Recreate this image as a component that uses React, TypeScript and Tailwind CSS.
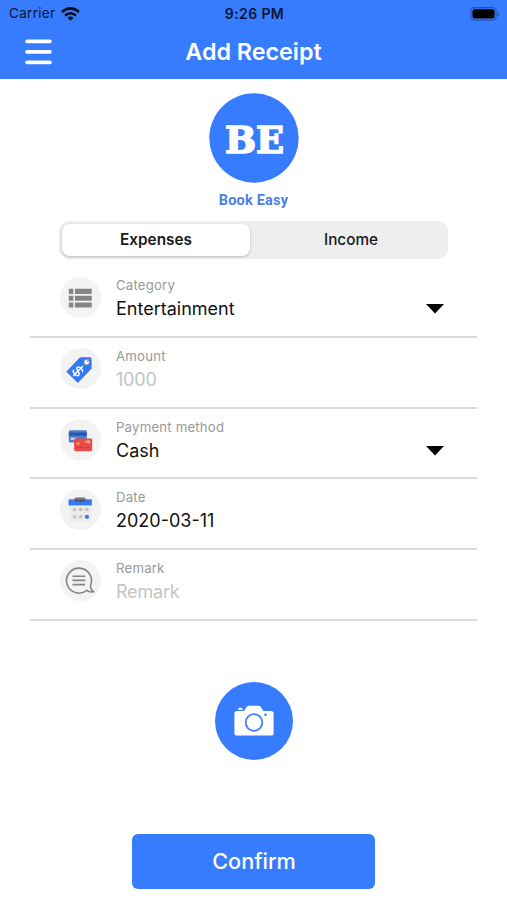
import type { ReactNode } from "react";

type Field = {
  label: string;
  value: string;
  icon: ReactNode;
  placeholder?: boolean;
  select?: boolean;
};

const ListIcon = () => (
  <svg width="41" height="41" viewBox="0 0 42 42" fill="#858585">
    <path d="M9 12.1h4.7v5.2H9zM15.3 12.1h17.2v5.2H15.3zM9 19.1h4.7v5.2H9zM15.3 19.1h17.2v5.2H15.3zM9 26h4.7v5.2H9zM15.3 26h17.2v5.2H15.3z" />
  </svg>
);

const TagIcon = () => (
  <svg width="41" height="41" viewBox="0 0 42 42" fill="none">
    <path d="M20.6 9.6h10.2q1.6 0 1.6 1.6V21L18.3 35.8 6.4 24.4z" fill="#3478f6" />
    <circle cx="27.3" cy="14.5" r="2.6" fill="#fff" stroke="#8b9196" strokeWidth=".6" />
    <path d="M27.8 14l3.9-4.2" stroke="#8b9196" strokeWidth="1.1" />
    <g transform="rotate(45 18.5 23.5)" stroke="#fff" strokeWidth="1.5" strokeLinecap="round">
      <path d="M22.3 20.8c-.8-1.9-6.6-2.1-7.1.7-.4 3 7 1.3 6.8 4.6-.2 2.9-6.5 2.5-7.4.2M18.5 17v13" />
    </g>
  </svg>
);

const CardsIcon = () => (
  <svg width="41" height="41" viewBox="0 0 42 42">
    <rect x="9" y="11.5" width="18.5" height="12.5" rx="1.5" fill="#4b80d8" />
    <path d="M9 13.9h18.5v3.2H9z" fill="#2c54a5" />
    <path d="M11 19.3h5v2h-5z" fill="#d7e5fc" />
    <rect x="14.4" y="20" width="18.6" height="13" rx="1.5" fill="#e94c4c" />
    <path d="M17 24.2h3v2h-3z" fill="#edb64d" />
    <path d="M17 29.3h7M26 29.3h4" stroke="#b93d43" />
    <circle cx="27" cy="23" r="1.6" fill="#ed8270" />
    <circle cx="29.4" cy="23.3" r="1.6" fill="#f4b28b" />
  </svg>
);

const CalendarIcon = () => (
  <svg width="41" height="41" viewBox="0 0 42 42">
    <path d="M10 16h22v15.5q0 1.8-1.8 1.8H11.8q-1.8 0-1.8-1.8z" fill="#ebebeb" />
    <path d="M8.8 10.6h23.8v6.2H8.8z" fill="#3478f6" />
    <path d="M14 11l1.8-2.2h9.4L27 11v2.2H14z" fill="#6b7484" />
    <path d="M16 12h9.5" stroke="#303a4c" strokeWidth="1.6" strokeDasharray="1.5 .8" />
    <g fill="#c8c3ae">
      <circle cx="15" cy="21" r="1.8" />
      <circle cx="21.2" cy="21" r="1.8" />
      <circle cx="27.4" cy="21" r="1.8" />
      <circle cx="15" cy="28.5" r="1.8" />
      <circle cx="21.2" cy="28.5" r="1.8" />
    </g>
    <circle cx="27.6" cy="28.5" r="2.2" fill="#3478f6" />
  </svg>
);

const RemarkIcon = () => (
  <svg width="41" height="41" viewBox="0 0 42 42" fill="none" stroke="#858585" strokeWidth="1.6" strokeLinejoin="round">
    <path d="M27.4 31.2A12.8 12.8 0 1 1 31.4 25.8C30.8 28.8 32.2 31 34.6 32.4C31.8 33.2 29.2 32.7 27.4 31.2Z" />
    <path d="M12.8 16.6h13M12.8 20.9h13M12.8 25.2h13" />
  </svg>
);

const fields: Field[] = [
  { label: "Category", value: "Entertainment", icon: <ListIcon />, select: true },
  { label: "Amount", value: "1000", icon: <TagIcon />, placeholder: true },
  { label: "Payment method", value: "Cash", icon: <CardsIcon />, select: true },
  { label: "Date", value: "2020-03-11", icon: <CalendarIcon /> },
  { label: "Remark", value: "Remark", icon: <RemarkIcon />, placeholder: true },
];

const StatusBar = () => (
  <div className="grid h-[27px] grid-cols-[1fr_80px_1fr] items-center pr-[7px] pl-[9px] text-[13.5px] text-[#071635]">
    <div className="flex items-center gap-[6px]">
      <span className="tracking-[0.3px]">Carrier</span>
      <svg width="19" height="14" viewBox="0 0 19 14" fill="none" stroke="#050b18" strokeWidth="2.6">
        <path d="M1 5.1Q9.5-2.3 18 5.1" />
        <path d="M4 8.5q5.5-4.5 11 0" />
        <path d="M9.5 13.7L6.5 10.7q3-2.4 6 0z" fill="#050b18" stroke="none" />
      </svg>
    </div>
    <span className="text-center text-[14px] font-semibold tracking-[0.4px]">9:26 PM</span>
    <svg className="justify-self-end" width="30" height="14" viewBox="0 0 30 14">
      <rect x=".9" y=".6" width="25.2" height="12.6" rx="3.6" fill="none" stroke="#2252ae" strokeWidth="1.1" />
      <rect x="2.5" y="2.2" width="22" height="9.4" rx="2" fill="#000" />
      <path d="M27.6 5v4q1.7-.6 1.7-2t-1.7-2" fill="#2252ae" />
    </svg>
  </div>
);

const FieldRow = ({ label, value, icon, placeholder, select }: Field) => (
  <div className="flex h-[70.8px] items-start border-b-2 border-[#dadada] pt-[10px] pr-[33px] pl-[30px]">
    <div className="size-[41px] shrink-0 rounded-full bg-[#f3f3f3]">{icon}</div>
    <div className="ml-[15px] flex-1">
      <div className="text-[13.2px] leading-[17px] tracking-[0.2px] text-[#999]">{label}</div>
      <div className={`mt-[3px] text-[18px] leading-[24px] ${placeholder ? "tracking-[-0.2px] text-[#c4c4c4]" : "text-[#111]"}`}>
        {value}
      </div>
    </div>
    {select && (
      <svg className="mt-[27px]" width="18" height="10" viewBox="0 0 18 10">
        <path d="M0 0h18L9 9.6z" />
      </svg>
    )}
  </div>
);

const App = () => {
  return (
    <div className="flex h-[900px] w-[507px] flex-col overflow-hidden bg-white font-['Inter',sans-serif]">
      {/* HEADER */}
      <header className="h-[79px] shrink-0 bg-[#377bff]">
        <StatusBar />
        <div className="grid h-[50px] grid-cols-[80px_1fr_80px] items-center">
          <svg className="ml-[25px]" width="27" height="28" viewBox="0 0 27 28" stroke="#fff" strokeWidth="3.6" strokeLinecap="round">
            <path d="M2 3.4h23M2 13.9h23M2 24.4h23" />
          </svg>
          <h1 className="text-center text-[23.3px] font-semibold text-white">Add Receipt</h1>
        </div>
      </header>

      {/* LOGO */}
      <div className="flex flex-col items-center pt-[14px]">
        <svg width="90" height="90" viewBox="0 0 90 90">
          <circle cx="45" cy="45" r="44.7" fill="#377bff" />
          <text x="16" y="59.5" fontSize="38" fontWeight="700" fill="#fff" stroke="#fff" strokeWidth="1.7" textLength="59" lengthAdjust="spacingAndGlyphs" className="font-['DejaVu_Serif',serif]">
            BE
          </text>
        </svg>
        <p className="mt-[8px] font-['Roboto',sans-serif] text-[14.5px] leading-[20px] font-bold tracking-[0.2px] text-[#4a80e8]">Book Easy</p>
      </div>

      {/* TABS */}
      <div className="mx-[59px] mt-[10px] flex h-[38px] shrink-0 rounded-[10px] bg-[#eee] p-[3px] text-[15.3px] text-[#1a1a1a]">
        <button className="w-[188px] rounded-[8px] bg-white font-semibold shadow-[0_1px_3px_rgba(0,0,0,0.22)]">Expenses</button>
        <button className="flex-1 pl-[7px] font-medium">Income</button>
      </div>

      {/* FORM */}
      <div className="mx-[30px] mt-[8px]">
        {fields.map((field) => (
          <FieldRow key={field.label} {...field} />
        ))}
      </div>

      {/* ACTIONS */}
      <div className="mt-[61px] flex flex-col items-center">
        <button className="flex size-[78px] items-center justify-center rounded-full bg-[#377bff]">
          <svg width="40" height="32" viewBox="0 0 40 32">
            <path d="M3 6h7l2.6-4q.8-1.2 2.2-1.2h9.8q1.4 0 2.2 1.2L29.4 6H37q2.6 0 2.6 2.6V28q0 2.6-2.6 2.6H3Q.4 30.6.4 28V8.6Q.4 6 3 6z" fill="#fff" />
            <path d="M3.8 4.8q.2-2 2-2H7q1.8 0 2 2z" fill="#fff" />
            <circle cx="20" cy="17.5" r="8.3" fill="none" stroke="#377bff" strokeWidth="1.7" />
            <circle cx="31.5" cy="9.8" r="1.3" fill="#377bff" />
          </svg>
        </button>
        <button className="mt-[74px] h-[55px] w-[243px] rounded-[6px] bg-[#377bff] pl-[1px] text-[21.7px] font-medium text-white">Confirm</button>
      </div>
    </div>
  );
};

export default App;
